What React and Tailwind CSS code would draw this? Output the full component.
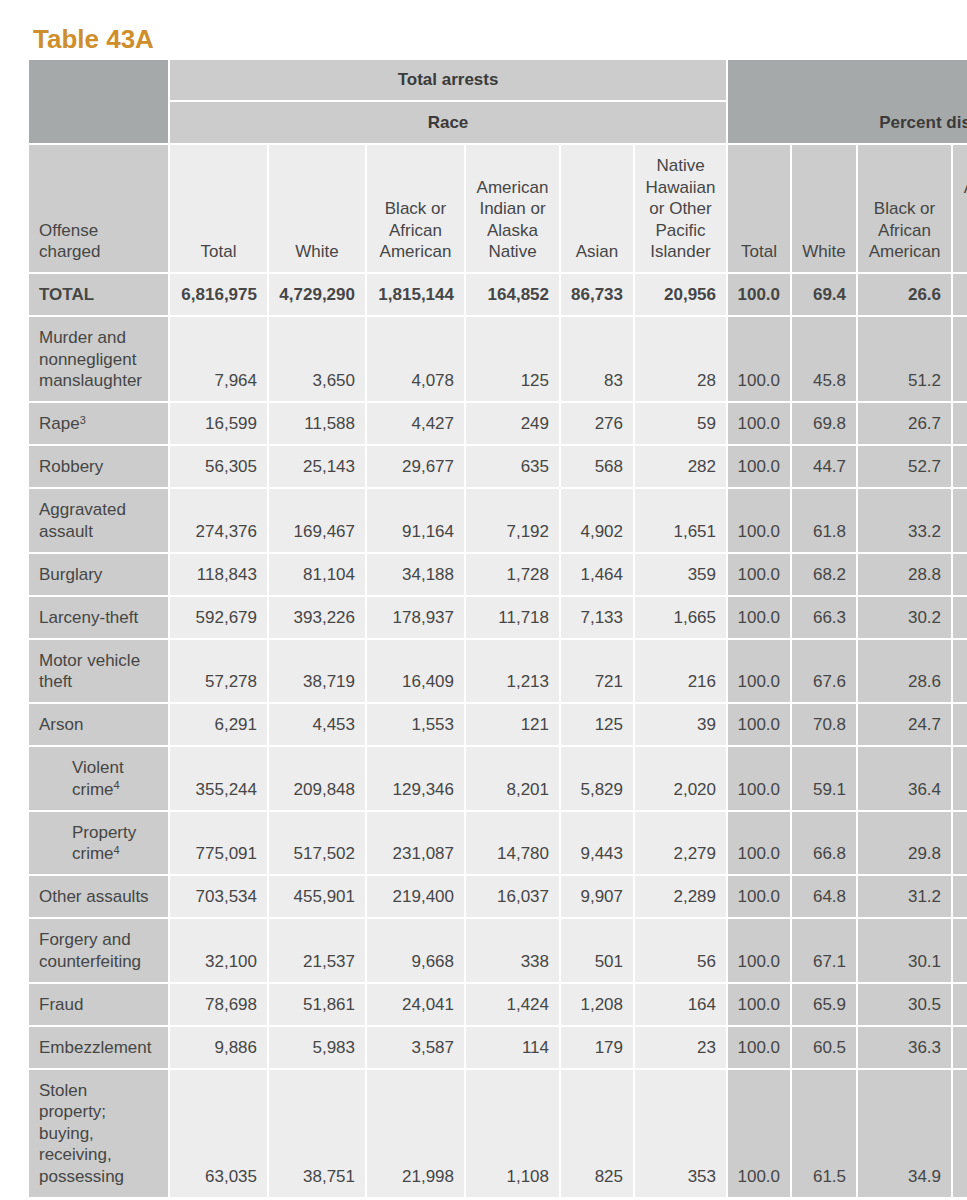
import React from 'react';

// Table 43A — arrests by race, clipped at the viewport edge like the source scan
const ROWS = [
  { name: 'TOTAL', bold: true, v: [6816975, 4729290, 1815144, 164852, 86733, 20956] },
  { name: 'Murder and nonnegligent manslaughter', v: [7964, 3650, 4078, 125, 83, 28] },
  { name: 'Rape', sup: '3', v: [16599, 11588, 4427, 249, 276, 59] },
  { name: 'Robbery', v: [56305, 25143, 29677, 635, 568, 282] },
  { name: 'Aggravated assault', v: [274376, 169467, 91164, 7192, 4902, 1651] },
  { name: 'Burglary', v: [118843, 81104, 34188, 1728, 1464, 359] },
  { name: 'Larceny-theft', v: [592679, 393226, 178937, 11718, 7133, 1665] },
  { name: 'Motor vehicle theft', v: [57278, 38719, 16409, 1213, 721, 216] },
  { name: 'Arson', v: [6291, 4453, 1553, 121, 125, 39] },
  { name: 'Violent crime', sup: '4', indent: true, v: [355244, 209848, 129346, 8201, 5829, 2020] },
  { name: 'Property crime', sup: '4', indent: true, v: [775091, 517502, 231087, 14780, 9443, 2279] },
  { name: 'Other assaults', v: [703534, 455901, 219400, 16037, 9907, 2289] },
  { name: 'Forgery and counterfeiting', v: [32100, 21537, 9668, 338, 501, 56] },
  { name: 'Fraud', v: [78698, 51861, 24041, 1424, 1208, 164] },
  { name: 'Embezzlement', v: [9886, 5983, 3587, 114, 179, 23] },
  { name: 'Stolen property; buying, receiving, possessing', v: [63035, 38751, 21998, 1108, 825, 353] },
];

const LABELS = [
  'Total',
  'White',
  'Black or African American',
  'American Indian or Alaska Native',
  'Asian',
  'Native Hawaiian or Other Pacific Islander',
];

// offense column, six race columns, six percent columns
const WIDTHS = [
  'w-[139px]',
  'w-[97px]', 'w-[96px]', 'w-[97px]', 'w-[93px]', 'w-[72px]', 'w-[91px]',
  'w-[62px]', 'w-[64px]', 'w-[93px]', 'w-[93px]', 'w-[72px]', 'w-[91px]',
];

const fmt = (n) => n.toLocaleString('en-US');
const pct = (n, total) => ((n / total) * 100).toFixed(1);

const cellY = 'pt-[10px] pb-[9.5px]';

export default function App() {
  return (
    <div className="w-full min-h-[1200px] bg-white overflow-hidden [font-family:'Liberation_Sans',Arial,sans-serif] text-[#464646]">
      <h1 className="pl-[33px] pt-[24px] h-[58px] text-[26px] leading-[30px] font-bold text-[#cf8e2c]">
        Table 43A
      </h1>

      <table className="ml-[27px] w-[1188px] table-fixed border-separate border-spacing-[2px] bg-white text-[17px] leading-[21.5px]">
        <colgroup>
          {WIDTHS.map((w, i) => <col key={i} className={w} />)}
        </colgroup>
        <thead>
          <tr className="h-[40px]">
            <th rowSpan={2} className="bg-[#a6a9aa]" />
            <th colSpan={6} className="bg-[#cbcccb] font-bold text-[#3b3b3b] text-center align-middle">
              Total arrests
            </th>
            <th rowSpan={2} colSpan={6} className="bg-[#a6a9aa] font-bold text-[#3b3b3b] text-center align-bottom pb-[10px] pr-[16px]">
              Percent distribution<sup className="text-[11px]">2</sup>
            </th>
          </tr>
          <tr className="h-[41px]">
            <th colSpan={6} className="bg-[#cbcccb] font-bold text-[#3b3b3b] text-center align-middle">
              Race
            </th>
          </tr>
          <tr>
            <th className={`bg-[#cbcccb] font-normal text-left align-bottom pl-[10px] pr-[14px] ${cellY}`}>
              Offense charged
            </th>
            {LABELS.map((l) => (
              <th key={'r' + l} className={`bg-[#ededee] font-normal text-center align-bottom px-[8px] ${cellY}`}>
                {l}
              </th>
            ))}
            {LABELS.map((l) => (
              <th key={'p' + l} className={`bg-[#cbcccb] font-normal text-center align-bottom px-[8px] ${cellY}`}>
                {l}
              </th>
            ))}
          </tr>
        </thead>
        <tbody>
          {ROWS.map((r) => (
            <tr key={r.name} className={r.bold ? 'font-bold' : ''}>
              <td className={`bg-[#cbcccb] text-left align-top pr-[14px] ${cellY} ${r.indent ? 'pl-[43px]' : 'pl-[10px]'}`}>
                {r.name}
                {r.sup && <sup className="text-[11px]">{r.sup}</sup>}
              </td>
              {r.v.map((n, i) => (
                <td key={'c' + i} className={`bg-[#ededee] text-right align-bottom pr-[10px] ${cellY}`}>
                  {fmt(n)}
                </td>
              ))}
              {r.v.map((n, i) => (
                <td key={'p' + i} className={`bg-[#cbcccb] text-right align-bottom pr-[10px] ${cellY}`}>
                  {pct(n, r.v[0])}
                </td>
              ))}
            </tr>
          ))}
        </tbody>
      </table>
    </div>
  );
}
